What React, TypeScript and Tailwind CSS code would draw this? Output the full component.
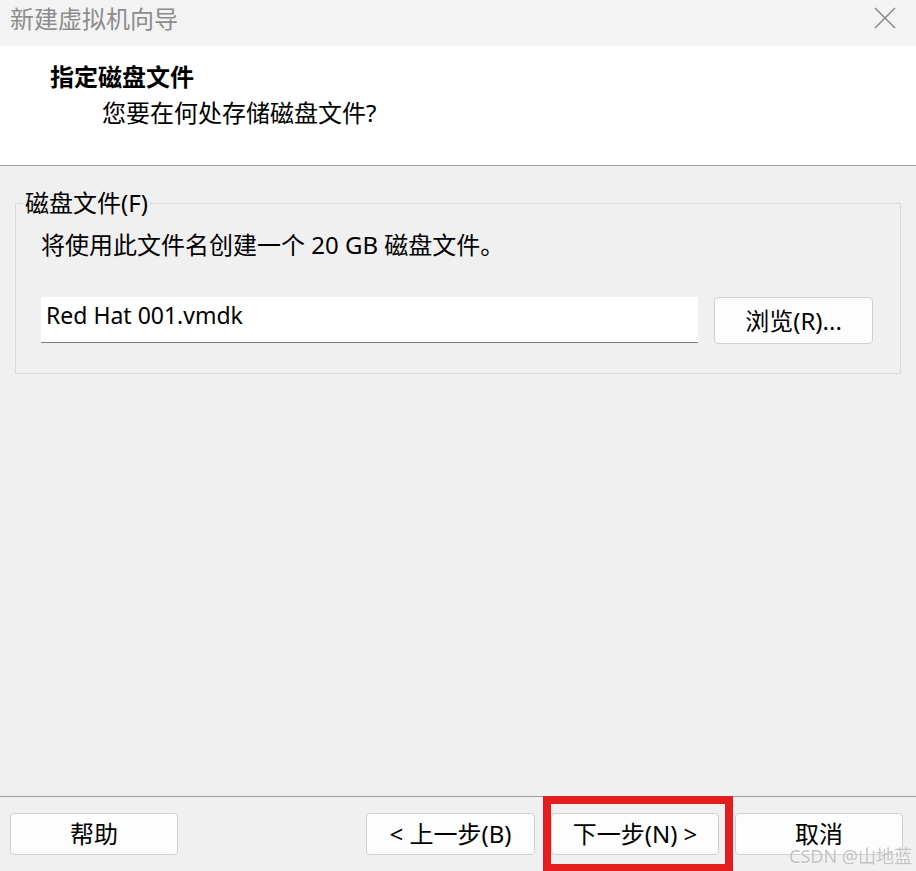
export default function App() {
  const font = "font-['Noto_Sans','Noto_Sans_CJK_SC',sans-serif]"

  return (
    <div className={`${font} w-[916px] h-[871px] flex flex-col bg-[#f0f0f0] text-black overflow-hidden`}>
      {/* Title bar */}
      <div className="h-[46px] bg-[#f3f3f3] flex items-center justify-between pl-[10px] pr-[20px]">
        <span className="text-[24px] leading-[30px] text-[#8c8c8c] -mt-[8px]">新建虚拟机向导</span>
        <svg width="22" height="22" viewBox="0 0 22 22" className="-mt-[10px]">
          <path d="M1 1 L21 21 M21 1 L1 21" stroke="#8c8c8c" strokeWidth="1.6" fill="none" />
        </svg>
      </div>

      {/* Header */}
      <div className="h-[120px] bg-white border-b border-[#a0a0a0] pl-[50px] pt-[16px]">
        <div className="text-[24px] leading-[30px] font-bold">指定磁盘文件</div>
        <div className="text-[24px] leading-[30px] mt-[6px] pl-[52px]">您要在何处存储磁盘文件?</div>
      </div>

      {/* Body */}
      <div className="flex-1 pt-[22px] px-[15px]">
        <fieldset className="border border-[#dadada] pl-[25px] pr-[27px] pb-[29px] pt-[12px]">
          <legend className="-ml-[18px] px-[2px] text-[24px] leading-[30px]">磁盘文件(F)</legend>
          <div className="text-[24px] leading-[30px]">将使用此文件名创建一个 20 GB 磁盘文件。</div>
          <div className="flex items-start gap-4 mt-[37px]">
            <div className="flex-1 h-[46px] bg-white border-b border-[#7a7a7a] pl-[5px] pt-[3px] text-[23px] leading-[30px]">
              Red Hat 001.vmdk
            </div>
            <button className="w-[159px] h-[47px] bg-[#fdfdfd] border border-[#d0d0d0] rounded-[4px] text-[24px] leading-[30px]">
              浏览(R)...
            </button>
          </div>
        </fieldset>
      </div>

      {/* Footer */}
      <div className="relative h-[75px] border-t border-[#a0a0a0] flex items-start pt-[16px] pl-[10px] pr-[13px]">
        <button className="w-[168px] h-[42px] bg-[#fdfdfd] border border-[#d0d0d0] rounded-[4px] text-[24px] leading-[30px]">
          帮助
        </button>
        <div className="flex-1" />
        <div className="flex gap-4">
          <button className="w-[169px] h-[42px] bg-[#fdfdfd] border border-[#d0d0d0] rounded-[4px] text-[24px] leading-[30px]">
            &lt; 上一步(B)
          </button>
          <button className="w-[168px] h-[42px] bg-[#fdfdfd] border border-[#d0d0d0] rounded-[4px] text-[24px] leading-[30px]">
            下一步(N) &gt;
          </button>
          <button className="w-[168px] h-[42px] bg-[#fdfdfd] border border-[#d0d0d0] rounded-[4px] text-[24px] leading-[30px]">
            取消
          </button>
        </div>

        {/* annotation box */}
        <div className="absolute left-[543px] top-[-1px] w-[190px] h-[76px] border-[8px] border-[#e41e1e]" />

        {/* watermark */}
        <div className="absolute right-[4px] bottom-[4px] text-[18px] leading-[22px] text-[#b4b4b4]/80 [text-shadow:0_0_2px_#fff]">
          CSDN @山地蓝
        </div>
      </div>
    </div>
  )
}
